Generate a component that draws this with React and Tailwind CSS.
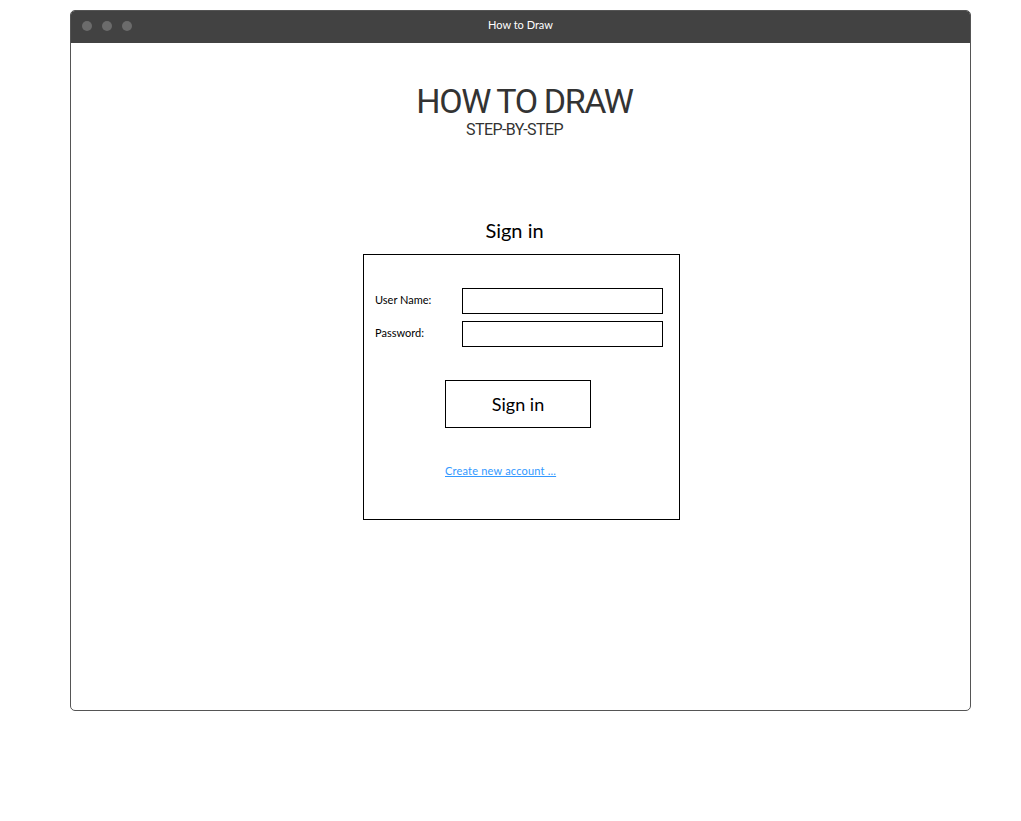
import React from "react";

const font = { fontFamily: "Lato, 'Liberation Sans', sans-serif" };
const roboto = { fontFamily: "Roboto, 'Liberation Sans', sans-serif" };

export default function App() {
  return (
    <div className="w-[1021px] h-[821px] bg-white pt-[10px] pl-[70px]" style={font}>
      <div className="w-[901px] h-[701px] border border-[#555] rounded-[5px] overflow-hidden flex flex-col">
        {/* title bar */}
        <div className="h-[32px] pb-[3px] bg-[#424242] flex items-center relative shrink-0">
          <div className="flex gap-[10px] pl-[11px]">
            <span className="w-[10px] h-[10px] rounded-full bg-[#6b6b6b]" />
            <span className="w-[10px] h-[10px] rounded-full bg-[#6b6b6b]" />
            <span className="w-[10px] h-[10px] rounded-full bg-[#6b6b6b]" />
          </div>
          <div className="absolute inset-0 pb-[3px] flex items-center justify-center text-[11px] text-white">How to Draw</div>
        </div>

        {/* content */}
        <div className="flex flex-col items-center">
          <h1 className="mt-[38px] pl-[8px] text-[34px] leading-[40px] text-[#333] tracking-[-1.4px]" style={roboto}>
            HOW TO DRAW
          </h1>
          <p className="-mt-[1px] text-[16px] leading-[20px] text-[#333] mr-[12px] tracking-[-0.6px]" style={roboto}>
            STEP-BY-STEP
          </p>

          <h2 className="mt-[78px] mb-[1px] text-[20px] leading-[24px] text-black mr-[12px]">Sign in</h2>

          <div className="mt-[11px] ml-[2px] w-[317px] h-[266px] border border-black flex flex-col">
            <div className="mt-[33px] px-[11px] flex flex-col gap-[7px]">
              <div className="flex items-center">
                <label className="w-[87px] -mt-[2px] text-[11px] text-black">User Name:</label>
                <div className="w-[201px] h-[26px] border border-black" />
              </div>
              <div className="flex items-center">
                <label className="w-[87px] -mt-[2px] text-[11px] text-black">Password:</label>
                <div className="w-[201px] h-[26px] border border-black" />
              </div>
            </div>
            <div className="mt-[33px] pl-[81px]">
              <button className="w-[146px] h-[48px] border border-black text-[18px] text-black">Sign in</button>
            </div>
            <div className="mt-[29px] pl-[81px]">
              <a className="text-[11px] text-[#3399ff] underline tracking-[0.2px]">Create new account ...</a>
            </div>
          </div>
        </div>
      </div>
    </div>
  );
}
